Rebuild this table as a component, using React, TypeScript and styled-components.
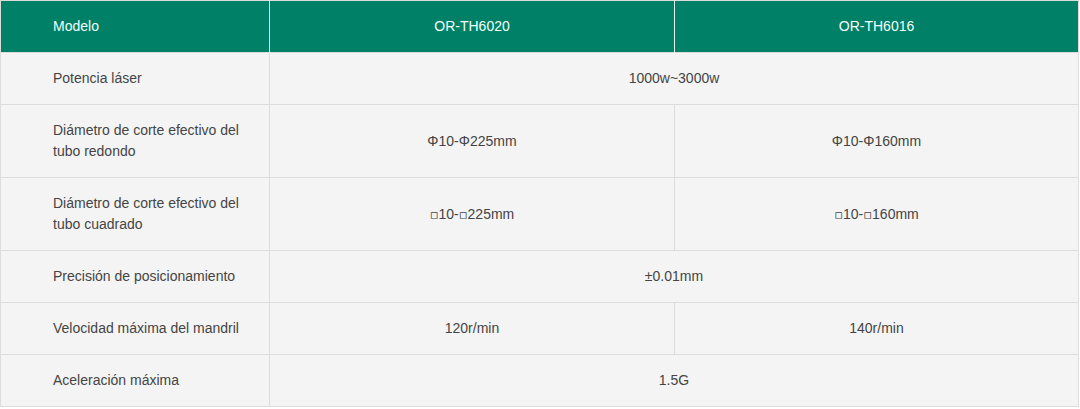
import React from 'react';
import styled, { createGlobalStyle } from 'styled-components';

const GlobalStyle = createGlobalStyle`
  html, body {
    margin: 0;
    padding: 0;
    background: #fff;
  }
  body {
    font-family: "Liberation Sans", Arial, sans-serif;
  }
`;

type Row = {
  label: string;
  values: React.ReactNode[]; // one value spans both models
};

const models = ['OR-TH6020', 'OR-TH6016'];

// small square mark used for square tube sizes
const Sq = () => <Square>▫</Square>;

const rows: Row[] = [
  { label: 'Potencia láser', values: ['1000w~3000w'] },
  { label: 'Diámetro de corte efectivo del tubo redondo', values: ['Φ10-Φ225mm', 'Φ10-Φ160mm'] },
  {
    label: 'Diámetro de corte efectivo del tubo cuadrado',
    values: [
      <><Sq />10-<Sq />225mm</>,
      <><Sq />10-<Sq />160mm</>,
    ],
  },
  { label: 'Precisión de posicionamiento', values: ['±0.01mm'] },
  { label: 'Velocidad máxima del mandril', values: ['120r/min', '140r/min'] },
  { label: 'Aceleración máxima', values: ['1.5G'] },
];

const SpecTable = () => (
  <Table>
    <colgroup>
      <col style={{ width: 269 }} />
      <col style={{ width: 405 }} />
      <col style={{ width: 404 }} />
    </colgroup>
    <thead>
      <tr>
        <HeadCell $label>Modelo</HeadCell>
        {models.map((m) => (
          <HeadCell key={m}>{m}</HeadCell>
        ))}
      </tr>
    </thead>
    <tbody>
      {rows.map((row) => (
        <tr key={row.label}>
          <LabelCell>{row.label}</LabelCell>
          {row.values.length === 1 ? (
            <ValueCell colSpan={2}>{row.values[0]}</ValueCell>
          ) : (
            row.values.map((v, i) => <ValueCell key={i}>{v}</ValueCell>)
          )}
        </tr>
      ))}
    </tbody>
  </Table>
);

const App = () => (
  <>
    <GlobalStyle />
    <Wrapper>
      <SpecTable />
    </Wrapper>
  </>
);

// --- Styled Components ---
const Wrapper = styled.div`
  width: 1080px;
`;

const Table = styled.table`
  width: 1078px;
  border-collapse: collapse;
  table-layout: fixed;
  font-size: 14px;
  line-height: 21px;
  border: 1px solid #dcdcdc;
`;

const HeadCell = styled.th<{ $label?: boolean }>`
  background: #008066;
  color: #f2fffb;
  font-weight: normal;
  height: 51px;
  padding: ${(p) => (p.$label ? '0 0 0 52px' : '0')};
  text-align: ${(p) => (p.$label ? 'left' : 'center')};
  border-left: 1px solid #e6f2ee;
  &:first-child {
    border-left: none;
  }
`;

const LabelCell = styled.td`
  background: #f4f4f4;
  color: #444;
  padding: 15px 20px 15px 52px;
  border-top: 1px solid #dcdcdc;
  border-right: 1px solid #dcdcdc;
  vertical-align: middle;
`;

const ValueCell = styled.td`
  background: #f4f4f4;
  color: #444;
  text-align: center;
  padding: 15px 10px;
  border-top: 1px solid #dcdcdc;
  border-left: 1px solid #dcdcdc;
  vertical-align: middle;
`;

const Square = styled.span`
  font-family: "DejaVu Sans", sans-serif;
  font-size: 13px;
`;

export default App;
